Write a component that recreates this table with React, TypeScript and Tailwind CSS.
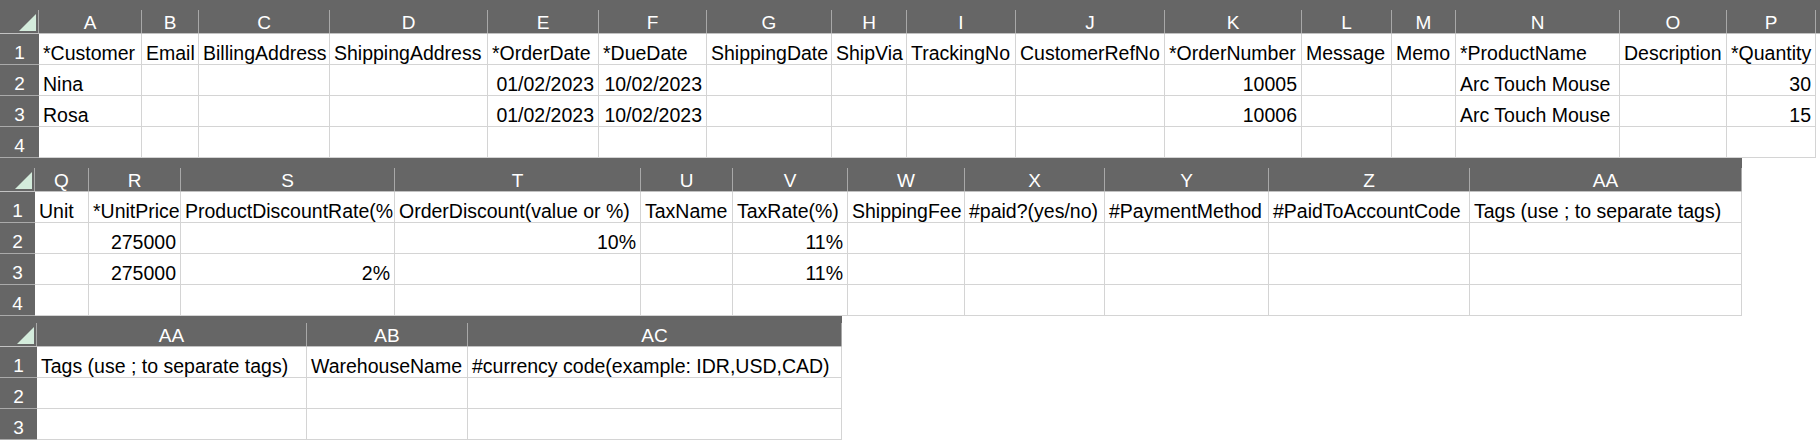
import React from 'react';

type Col = { label: string; w: string };

const isNum = (t: string) => /^[\d/%.]+$/.test(t);

const sheet1Cols: Col[] = [
  { label: 'A', w: 'w-[103px]' },
  { label: 'B', w: 'w-[57px]' },
  { label: 'C', w: 'w-[131px]' },
  { label: 'D', w: 'w-[158px]' },
  { label: 'E', w: 'w-[111px]' },
  { label: 'F', w: 'w-[108px]' },
  { label: 'G', w: 'w-[125px]' },
  { label: 'H', w: 'w-[75px]' },
  { label: 'I', w: 'w-[109px]' },
  { label: 'J', w: 'w-[149px]' },
  { label: 'K', w: 'w-[137px]' },
  { label: 'L', w: 'w-[90px]' },
  { label: 'M', w: 'w-[64px]' },
  { label: 'N', w: 'w-[164px]' },
  { label: 'O', w: 'w-[107px]' },
  { label: 'P', w: 'w-[89px]' },
];

const sheet1Rows: string[][] = [
  ['*Customer', 'Email', 'BillingAddress', 'ShippingAddress', '*OrderDate', '*DueDate', 'ShippingDate', 'ShipVia', 'TrackingNo', 'CustomerRefNo', '*OrderNumber', 'Message', 'Memo', '*ProductName', 'Description', '*Quantity'],
  ['Nina', '', '', '', '01/02/2023', '10/02/2023', '', '', '', '', '10005', '', '', 'Arc Touch Mouse', '', '30'],
  ['Rosa', '', '', '', '01/02/2023', '10/02/2023', '', '', '', '', '10006', '', '', 'Arc Touch Mouse', '', '15'],
  [],
];

const sheet2Cols: Col[] = [
  { label: 'Q', w: 'w-[54px]' },
  { label: 'R', w: 'w-[92px]' },
  { label: 'S', w: 'w-[214px]' },
  { label: 'T', w: 'w-[246px]' },
  { label: 'U', w: 'w-[92px]' },
  { label: 'V', w: 'w-[115px]' },
  { label: 'W', w: 'w-[117px]' },
  { label: 'X', w: 'w-[140px]' },
  { label: 'Y', w: 'w-[164px]' },
  { label: 'Z', w: 'w-[201px]' },
  { label: 'AA', w: 'w-[272px]' },
];

const sheet2Rows: string[][] = [
  ['Unit', '*UnitPrice', 'ProductDiscountRate(%', 'OrderDiscount(value or %)', 'TaxName', 'TaxRate(%)', 'ShippingFee', '#paid?(yes/no)', '#PaymentMethod', '#PaidToAccountCode', 'Tags (use ; to separate tags)'],
  ['', '275000', '', '10%', '', '11%'],
  ['', '275000', '2%', '', '', '11%'],
  [],
];

const sheet3Cols: Col[] = [
  { label: 'AA', w: 'w-[270px]' },
  { label: 'AB', w: 'w-[161px]' },
  { label: 'AC', w: 'w-[374px]' },
];

const sheet3Rows: string[][] = [
  ['Tags (use ; to separate tags)', 'WarehouseName', '#currency code(example: IDR,USD,CAD)'],
  [],
  [],
];

function Corner({ w }: { w: string }) {
  return (
    <div className={`${w} shrink-0 h-full flex items-end justify-end pr-[2px] pb-[2px] border-r border-[#a8a8a8]`}>
      <svg width="17" height="17" viewBox="0 0 17 17">
        <polygon points="17,0 17,17 0,17" fill="#d4ecdc" />
      </svg>
    </div>
  );
}

function Sheet({
  cols,
  rows,
  headW,
  band,
  width,
}: {
  cols: Col[];
  rows: string[][];
  headW: string;
  band: string;
  width: string;
}) {
  return (
    <section className={`${width} bg-white`}>
      <div className={`${band} bg-[#666666]`} />

      {/* column letters */}
      <div className="flex h-[24px] bg-[#666666] border-b border-[#c2c2c2]">
        <Corner w={headW} />
        {cols.map((c) => (
          <div
            key={c.label}
            className={`${c.w} shrink-0 h-full border-r border-[#a8a8a8] flex items-center justify-center pt-[1px] text-white text-[19px] leading-none`}
          >
            {c.label}
          </div>
        ))}
      </div>

      {rows.map((r, i) => (
        <div key={i} className="flex h-[31px]">
          <div className={`${headW} shrink-0 bg-[#666666] border-b border-[#aaaaaa] flex items-end justify-center text-white text-[19px] leading-[22px]`}>
            {i + 1}
          </div>
          {cols.map((c, j) => {
            const t = r[j] ?? '';
            const right = i > 0 && isNum(t);
            return (
              <div
                key={c.label}
                className={`${c.w} shrink-0 border-r border-b border-[#d4d4d4] overflow-hidden whitespace-nowrap flex items-end text-black text-[19.5px] leading-[22px] ${right ? 'justify-end pr-[4px]' : 'pl-[4px]'}`}
              >
                {t}
              </div>
            );
          })}
        </div>
      ))}
    </section>
  );
}

export default function App() {
  return (
    <div className="w-[1820px] h-[440px] overflow-hidden bg-white font-['Liberation_Sans',Arial,sans-serif]">
      <Sheet cols={sheet1Cols} rows={sheet1Rows} headW="w-[39px]" band="h-[10px]" width="w-full" />
      <Sheet cols={sheet2Cols} rows={sheet2Rows} headW="w-[35px]" band="h-[10px]" width="w-[1742px]" />
      <Sheet cols={sheet3Cols} rows={sheet3Rows} headW="w-[37px]" band="h-[7px]" width="w-[842px]" />
    </div>
  );
}
